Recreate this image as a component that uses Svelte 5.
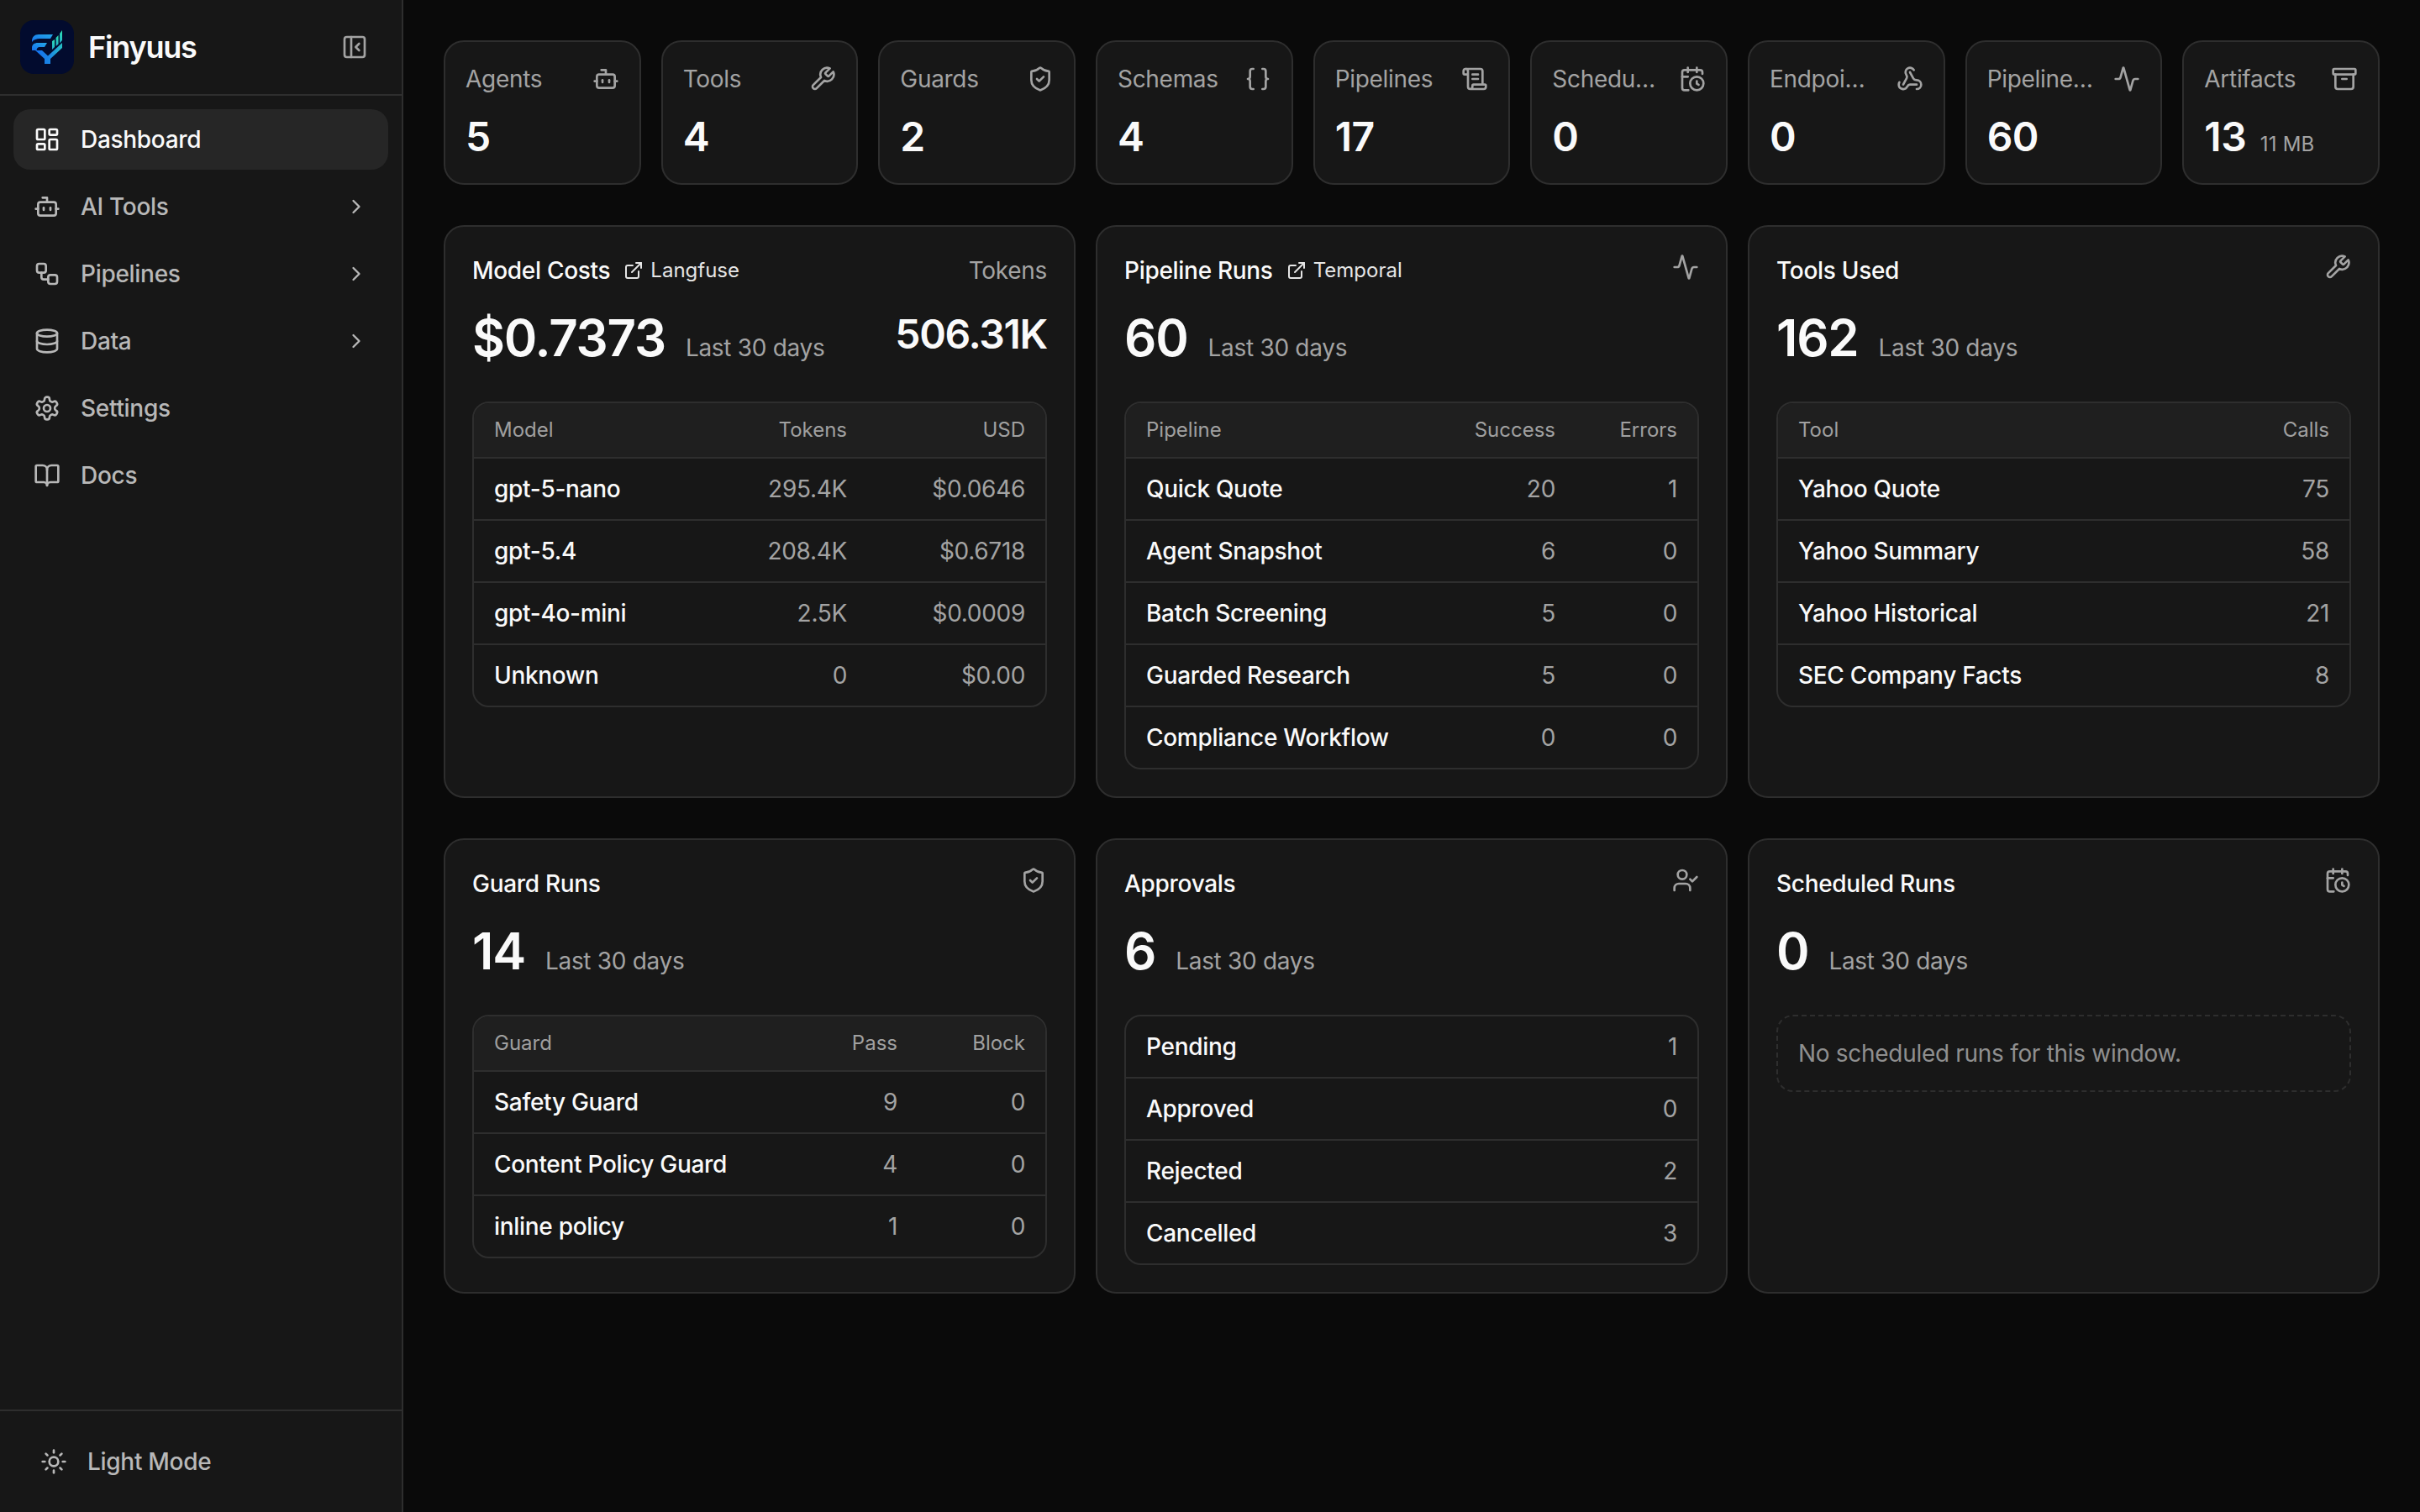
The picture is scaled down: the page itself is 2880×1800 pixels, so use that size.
<script>
const icons = {
  dashboard: '<rect width="7" height="9" x="3" y="3" rx="1"/><rect width="7" height="5" x="14" y="3" rx="1"/><rect width="7" height="9" x="14" y="12" rx="1"/><rect width="7" height="5" x="3" y="16" rx="1"/>',
  bot: '<path d="M12 8V4H8"/><rect width="16" height="12" x="4" y="8" rx="2"/><path d="M2 14h2"/><path d="M20 14h2"/><path d="M15 13v2"/><path d="M9 13v2"/>',
  workflow: '<rect width="8" height="8" x="3" y="3" rx="2"/><path d="M7 11v4a2 2 0 0 0 2 2h4"/><rect width="8" height="8" x="13" y="13" rx="2"/>',
  database: '<ellipse cx="12" cy="5" rx="9" ry="3"/><path d="M3 5V19A9 3 0 0 0 21 19V5"/><path d="M3 12A9 3 0 0 0 21 12"/>',
  settings: '<path d="M12.22 2h-.44a2 2 0 0 0-2 2v.18a2 2 0 0 1-1 1.73l-.43.25a2 2 0 0 1-2 0l-.15-.08a2 2 0 0 0-2.73.73l-.22.38a2 2 0 0 0 .73 2.73l.15.1a2 2 0 0 1 1 1.72v.51a2 2 0 0 1-1 1.74l-.15.09a2 2 0 0 0-.73 2.73l.22.38a2 2 0 0 0 2.73.73l.15-.08a2 2 0 0 1 2 0l.43.25a2 2 0 0 1 1 1.73V20a2 2 0 0 0 2 2h.44a2 2 0 0 0 2-2v-.18a2 2 0 0 1 1-1.73l.43-.25a2 2 0 0 1 2 0l.15.08a2 2 0 0 0 2.73-.73l.22-.39a2 2 0 0 0-.73-2.73l-.15-.08a2 2 0 0 1-1-1.74v-.5a2 2 0 0 1 1-1.74l.15-.09a2 2 0 0 0 .73-2.73l-.22-.38a2 2 0 0 0-2.73-.73l-.15.08a2 2 0 0 1-2 0l-.43-.25a2 2 0 0 1-1-1.73V4a2 2 0 0 0-2-2z"/><circle cx="12" cy="12" r="3"/>',
  book: '<path d="M12 7v14"/><path d="M3 18a1 1 0 0 1-1-1V4a1 1 0 0 1 1-1h5a4 4 0 0 1 4 4 4 4 0 0 1 4-4h5a1 1 0 0 1 1 1v13a1 1 0 0 1-1 1h-6a3 3 0 0 0-3 3 3 3 0 0 0-3-3z"/>',
  chevron: '<path d="m9 18 6-6-6-6"/>',
  panel: '<rect width="18" height="18" x="3" y="3" rx="2"/><path d="M9 3v18"/><path d="m16 15-3-3 3-3"/>',
  sun: '<circle cx="12" cy="12" r="4"/><path d="M12 2v2"/><path d="M12 20v2"/><path d="m4.93 4.93 1.41 1.41"/><path d="m17.66 17.66 1.41 1.41"/><path d="M2 12h2"/><path d="M20 12h2"/><path d="m6.34 17.66-1.41 1.41"/><path d="m19.07 4.93-1.41 1.41"/>',
  wrench: '<path d="M14.7 6.3a1 1 0 0 0 0 1.4l1.6 1.6a1 1 0 0 0 1.4 0l3.77-3.77a6 6 0 0 1-7.94 7.94l-6.91 6.91a2.12 2.12 0 0 1-3-3l6.91-6.91a6 6 0 0 1 7.94-7.94l-3.76 3.76z"/>',
  shield: '<path d="M20 13c0 5-3.5 7.5-7.66 8.95a1 1 0 0 1-.67-.01C7.5 20.5 4 18 4 13V6a1 1 0 0 1 1-1c2 0 4.5-1.2 6.24-2.72a1.17 1.17 0 0 1 1.52 0C14.51 3.81 17 5 19 5a1 1 0 0 1 1 1z"/><path d="m9 12 2 2 4-4"/>',
  braces: '<path d="M8 3H7a2 2 0 0 0-2 2v5a2 2 0 0 1-2 2 2 2 0 0 1 2 2v5c0 1.1.9 2 2 2h1"/><path d="M16 21h1a2 2 0 0 0 2-2v-5c0-1.1.9-2 2-2a2 2 0 0 1-2-2V5a2 2 0 0 0-2-2h-1"/>',
  scroll: '<path d="M15 12h-5"/><path d="M15 8h-5"/><path d="M19 17V5a2 2 0 0 0-2-2H4"/><path d="M8 21h12a2 2 0 0 0 2-2v-1a1 1 0 0 0-1-1H11a1 1 0 0 0-1 1v1a2 2 0 1 1-4 0V5a2 2 0 1 0-4 0v2a1 1 0 0 0 1 1h3"/>',
  calendar: '<path d="M16 14v2.2l1.6 1"/><path d="M16 2v4"/><path d="M21 7.5V6a2 2 0 0 0-2-2H5a2 2 0 0 0-2 2v14a2 2 0 0 0 2 2h3.5"/><path d="M3 10h5"/><path d="M8 2v4"/><circle cx="16" cy="16" r="6"/>',
  webhook: '<path d="M18 16.98h-5.99c-1.1 0-1.95.94-2.48 1.9A4 4 0 0 1 2 17c.01-.7.2-1.4.57-2"/><path d="m6 17 3.13-5.78c.53-.97.1-2.18-.5-3.1a4 4 0 1 1 6.89-4.06"/><path d="m12 6 3.13 5.73C15.66 12.7 16.9 13 18 13a4 4 0 0 1 0 8"/>',
  activity: '<path d="M22 12h-2.48a2 2 0 0 0-1.93 1.46l-2.35 8.36a.25.25 0 0 1-.48 0L9.24 2.18a.25.25 0 0 0-.48 0l-2.35 8.36A2 2 0 0 1 4.49 12H2"/>',
  archive: '<rect width="20" height="5" x="2" y="3" rx="1"/><path d="M4 8v11a2 2 0 0 0 2 2h12a2 2 0 0 0 2-2V8"/><path d="M10 12h4"/>',
  external: '<path d="M15 3h6v6"/><path d="M10 14 21 3"/><path d="M18 13v6a2 2 0 0 1-2 2H5a2 2 0 0 1-2-2V8a2 2 0 0 1 2-2h6"/>',
  usercheck: '<path d="m16 11 2 2 4-4"/><path d="M16 21v-2a4 4 0 0 0-4-4H6a4 4 0 0 0-4 4v2"/><circle cx="9" cy="7" r="4"/>',
};

const nav = [
  { label: 'Dashboard', icon: 'dashboard', active: true },
  { label: 'AI Tools', icon: 'bot', more: true },
  { label: 'Pipelines', icon: 'workflow', more: true },
  { label: 'Data', icon: 'database', more: true },
  { label: 'Settings', icon: 'settings' },
  { label: 'Docs', icon: 'book' },
];

const stats = [
  { label: 'Agents', icon: 'bot', value: '5' },
  { label: 'Tools', icon: 'wrench', value: '4' },
  { label: 'Guards', icon: 'shield', value: '2' },
  { label: 'Schemas', icon: 'braces', value: '4' },
  { label: 'Pipelines', icon: 'scroll', value: '17' },
  { label: 'Scheduled', icon: 'calendar', value: '0' },
  { label: 'Endpoints', icon: 'webhook', value: '0' },
  { label: 'Pipeline Runs', icon: 'activity', value: '60' },
  { label: 'Artifacts', icon: 'archive', value: '13', extra: '11 MB' },
];

const cards = [
  {
    title: 'Model Costs', link: 'Langfuse', side: 'Tokens', value: '$0.7373', total: '506.31K', cols: 'cols-model',
    head: ['Model', 'Tokens', 'USD'],
    rows: [
      ['gpt-5-nano', '295.4K', '$0.0646'],
      ['gpt-5.4', '208.4K', '$0.6718'],
      ['gpt-4o-mini', '2.5K', '$0.0009'],
      ['Unknown', '0', '$0.00'],
    ],
  },
  {
    title: 'Pipeline Runs', link: 'Temporal', icon: 'activity', value: '60', cols: 'cols-pipeline',
    head: ['Pipeline', 'Success', 'Errors'],
    rows: [
      ['Quick Quote', '20', '1'],
      ['Agent Snapshot', '6', '0'],
      ['Batch Screening', '5', '0'],
      ['Guarded Research', '5', '0'],
      ['Compliance Workflow', '0', '0'],
    ],
  },
  {
    title: 'Tools Used', icon: 'wrench', value: '162', cols: 'cols-two',
    head: ['Tool', 'Calls'],
    rows: [
      ['Yahoo Quote', '75'],
      ['Yahoo Summary', '58'],
      ['Yahoo Historical', '21'],
      ['SEC Company Facts', '8'],
    ],
  },
  {
    title: 'Guard Runs', icon: 'shield', value: '14', cols: 'cols-guard',
    head: ['Guard', 'Pass', 'Block'],
    rows: [
      ['Safety Guard', '9', '0'],
      ['Content Policy Guard', '4', '0'],
      ['inline policy', '1', '0'],
    ],
  },
  {
    title: 'Approvals', icon: 'usercheck', value: '6', cols: 'cols-two',
    rows: [
      ['Pending', '1'],
      ['Approved', '0'],
      ['Rejected', '2'],
      ['Cancelled', '3'],
    ],
  },
  {
    title: 'Scheduled Runs', icon: 'calendar', value: '0',
    empty: 'No scheduled runs for this window.',
  },
];
</script>

{#snippet icon(name, cls)}
  <svg class="icon {cls}" viewBox="0 0 24 24" fill="none" stroke="currentColor" stroke-width="2" stroke-linecap="round" stroke-linejoin="round">
    {@html icons[name]}
  </svg>
{/snippet}

<div class="app">
  <aside class="sidebar">
    <div class="brand">
      <svg class="logo" viewBox="0 0 64 64">
        <defs>
          <linearGradient id="blue" x1="0" y1="1" x2="1" y2="0">
            <stop offset="0" stop-color="#1470ee" />
            <stop offset="1" stop-color="#25a8e6" />
          </linearGradient>
          <linearGradient id="arm" x1="0" y1="0" x2="1" y2="0">
            <stop offset="0" stop-color="#1470ee" />
            <stop offset="0.55" stop-color="#1b86e4" />
            <stop offset="1" stop-color="#27c2c4" />
          </linearGradient>
          <linearGradient id="teal" x1="0" y1="1" x2="0.6" y2="0">
            <stop offset="0" stop-color="#1fa6d0" />
            <stop offset="1" stop-color="#2ee0b0" />
          </linearGradient>
        </defs>
        <rect width="64" height="64" rx="16" fill="#020b2e" />
        <path d="M14 26v-1c0-5 3-8 8-8h17l-3 5H23c-3 0-7 1-9 4z" fill="url(#blue)" />
        <path d="M14 36v-3c0-4 3-6 7-6h11l-3 5h-6c-2 0-3 1-3.500 4z" fill="url(#blue)" />
        <path d="M18 36h8l7 6.500L50 27v6L36 46v6h-7v-6z" fill="url(#arm)" />
        <path d="M38 25l3-2v9l-3 3z" fill="url(#teal)" />
        <path d="M42.500 21l3-3v10.500l-3 2.500z" fill="url(#teal)" />
        <path d="M47 16l3-4v12l-3 3.500z" fill="url(#teal)" />
      </svg>
      <span class="brand-name">Finyuus</span>
      {@render icon('panel', 'collapse')}
    </div>

    <nav class="nav">
      {#each nav as item}
        <div class="nav-item" class:active={item.active}>
          {@render icon(item.icon, 'i32')}
          <span>{item.label}</span>
          {#if item.more}
            {@render icon('chevron', 'chevron')}
          {/if}
        </div>
      {/each}
    </nav>

    <div class="mode">
      {@render icon('sun', 'i32')}
      <span>Light Mode</span>
    </div>
  </aside>

  <main class="main">
    <section class="stats">
      {#each stats as stat}
        <div class="stat">
          <div class="stat-top">
            <span class="stat-label">{stat.label}</span>
            {@render icon(stat.icon, 'i32 muted')}
          </div>
          <div class="stat-value">
            {stat.value}
            {#if stat.extra}<small>{stat.extra}</small>{/if}
          </div>
        </div>
      {/each}
    </section>

    <section class="cards">
      {#each cards as card}
        <div class="card">
          <div class="card-top">
            <div class="card-title">
              <span>{card.title}</span>
              {#if card.link}
                <span class="ext">
                  {@render icon('external', 'i24')}
                  {card.link}
                </span>
              {/if}
            </div>
            {#if card.side}
              <span class="side">{card.side}</span>
            {:else}
              {@render icon(card.icon, 'i32 muted')}
            {/if}
          </div>

          <div class="figures">
            <div class="figure">
              <span class="big">{card.value}</span>
              <span class="period">Last 30 days</span>
            </div>
            {#if card.total}<span class="total">{card.total}</span>{/if}
          </div>

          {#if card.empty}
            <div class="empty">{card.empty}</div>
          {:else}
            <div class="table">
              {#if card.head}
                <div class="row head {card.cols}">
                  {#each card.head as h}<span>{h}</span>{/each}
                </div>
              {/if}
              {#each card.rows as row}
                <div class="row {card.cols}">
                  {#each row as c}<span>{c}</span>{/each}
                </div>
              {/each}
            </div>
          {/if}
        </div>
      {/each}
    </section>
  </main>
</div>

<style>
  :global(body) {
    margin: 0;
    background: #0a0a0a;
    font-family: Inter, "Liberation Sans", sans-serif;
    font-size: 28px;
    line-height: 40px;
    letter-spacing: -0.3px;
    color: #fafafa;
  }

  .app {
    display: flex;
    min-height: 1800px;
  }

  .icon {
    display: block;
    flex-shrink: 0;
  }
  .i32 { width: 32px; height: 32px; }
  .i24 { width: 24px; height: 24px; }
  .muted { color: #a3a3a3; }

  .sidebar {
    width: 480px;
    box-sizing: border-box;
    flex-shrink: 0;
    display: flex;
    flex-direction: column;
    background: #171717;
    border-right: 2px solid #2e2e2e;
  }

  .brand {
    height: 114px;
    box-sizing: border-box;
    display: flex;
    align-items: center;
    gap: 17px;
    padding: 0 40px 0 24px;
    border-bottom: 2px solid #2e2e2e;
  }
  .logo {
    width: 64px;
    height: 64px;
    flex-shrink: 0;
  }
  .brand-name {
    font-size: 36px;
    font-weight: 600;
    letter-spacing: -1.2px;
  }
  .brand :global(.collapse) {
    width: 32px;
    height: 32px;
    margin-left: auto;
    color: #a3a3a3;
  }

  .nav {
    display: flex;
    flex-direction: column;
    gap: 8px;
    padding: 16px;
  }
  .nav-item {
    height: 72px;
    display: flex;
    align-items: center;
    gap: 24px;
    padding: 0 24px;
    border-radius: 20px;
    font-weight: 500;
    color: #b8b8b8;
  }
  .nav-item.active {
    background: #262626;
    color: #fafafa;
  }
  .nav-item :global(.chevron) {
    width: 28px;
    height: 28px;
    margin-left: auto;
  }

  .mode {
    margin-top: auto;
    height: 122px;
    box-sizing: border-box;
    display: flex;
    align-items: center;
    gap: 24px;
    padding-left: 48px;
    border-top: 2px solid #2e2e2e;
    font-weight: 500;
    color: #b8b8b8;
  }

  .main {
    flex: 1;
    min-width: 0;
    padding: 48px;
  }

  .stats {
    display: grid;
    grid-template-columns: repeat(9, minmax(0, 1fr));
    gap: 24px;
    margin-bottom: 48px;
  }
  .stat {
    box-sizing: border-box;
    height: 172px;
    padding: 24px;
    background: #171717;
    border: 2px solid #2e2e2e;
    border-radius: 24px;
  }
  .stat-top {
    display: flex;
    align-items: center;
    justify-content: space-between;
    gap: 24px;
    height: 40px;
    margin-bottom: 17px;
  }
  .stat-label {
    min-width: 0;
    white-space: nowrap;
    overflow: hidden;
    text-overflow: ellipsis;
    color: #a3a3a3;
  }
  .stat-value {
    font-size: 48px;
    line-height: 64px;
    font-weight: 600;
    letter-spacing: -0.5px;
  }
  .stat-value small {
    margin-left: 5px;
    font-size: 24px;
    font-weight: 400;
    letter-spacing: 0.2px;
    color: #a3a3a3;
  }

  .cards {
    display: grid;
    grid-template-columns: repeat(3, minmax(0, 1fr));
    gap: 48px 24px;
  }
  .card {
    box-sizing: border-box;
    padding: 32px;
    background: #171717;
    border: 2px solid #2e2e2e;
    border-radius: 24px;
  }
  .card-top {
    display: flex;
    align-items: flex-start;
    justify-content: space-between;
  }
  .card-title {
    display: flex;
    align-items: center;
    gap: 16px;
    font-weight: 500;
  }
  .ext {
    display: flex;
    align-items: center;
    gap: 8px;
    font-size: 24px;
    font-weight: 400;
    letter-spacing: 0;
    color: #e5e5e5;
  }
  .side {
    color: #a3a3a3;
  }

  .figures {
    display: flex;
    align-items: flex-start;
    justify-content: space-between;
    margin: 24px 0 40px;
  }
  .figure {
    display: flex;
    align-items: baseline;
    gap: 24px;
  }
  .big {
    font-size: 60px;
    line-height: 72px;
    font-weight: 600;
    letter-spacing: -1.2px;
  }
  .period {
    color: #a3a3a3;
  }
  .total {
    font-size: 48px;
    line-height: 64px;
    font-weight: 600;
    letter-spacing: -1.3px;
  }

  .table {
    border: 2px solid #2e2e2e;
    border-radius: 20px;
    overflow: hidden;
  }
  .row {
    display: grid;
    align-items: center;
    height: 72px;
    padding: 0 24px;
    border-top: 2px solid #2e2e2e;
    color: #a3a3a3;
  }
  .row:first-child {
    border-top: 0;
  }
  .row span {
    text-align: right;
  }
  .row span:first-child {
    text-align: left;
    font-weight: 500;
    color: #fafafa;
  }
  .row.head {
    height: 64px;
    background: #1f1f1f;
    font-size: 24px;
    font-weight: 400;
    letter-spacing: 0;
    color: #a0a0a0;
  }
  .row.head span:first-child {
    font-weight: 400;
    color: #a0a0a0;
  }
  .cols-model { grid-template-columns: 1fr 140px 212px; }
  .cols-pipeline { grid-template-columns: 1fr 140px 145px; }
  .cols-guard { grid-template-columns: 1fr 120px 152px; }
  .cols-two { grid-template-columns: 1fr auto; }

  .empty {
    padding: 24px;
    border: 2px dashed #2e2e2e;
    border-radius: 20px;
    color: #8f8f8f;
  }
</style>
